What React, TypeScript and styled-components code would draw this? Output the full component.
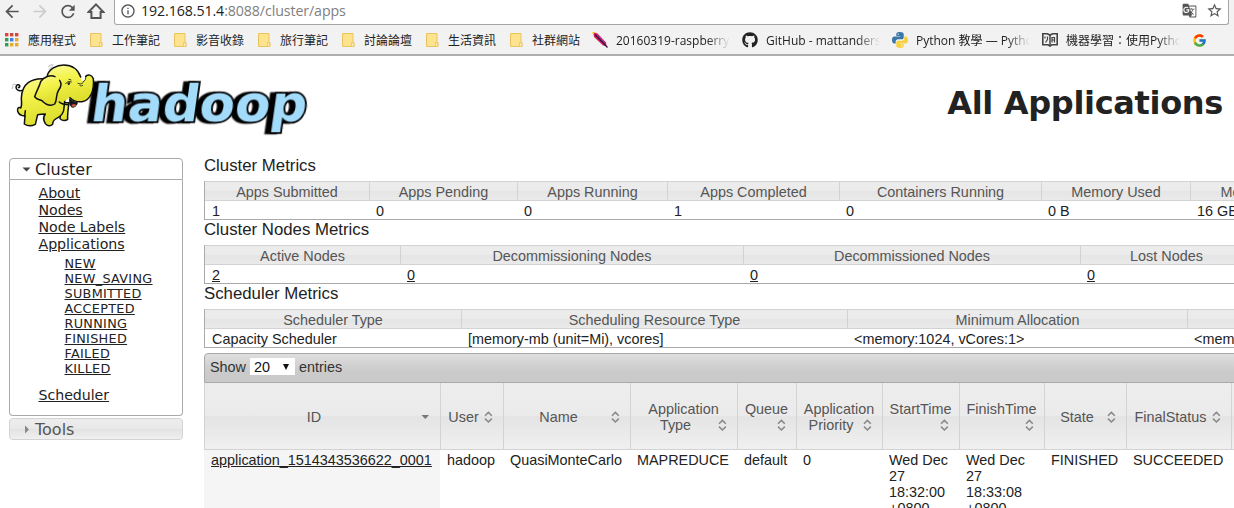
import React from 'react';
import styled, { createGlobalStyle, css } from 'styled-components';
import { MdInfoOutline, MdStarBorder, MdGTranslate, MdArrowBack, MdArrowForward, MdRefresh } from 'react-icons/md';
import { FaGithub } from 'react-icons/fa';
import { FcGoogle } from 'react-icons/fc';

const Global = createGlobalStyle`
  * { box-sizing: border-box; }
  html, body { margin: 0; background: #fff; overflow: hidden; }
`;

const Page = styled.div`
  width: 1234px;
  height: 508px;
  overflow: hidden;
  background: #fff;
  color: #222;
  font-family: 'Liberation Sans', Arial, sans-serif;
  font-size: 14.4px;
`;

/* Browser chrome */
const Chrome = styled.header`
  height: 56px;
  background: #f2f2f2;
  border-bottom: 2px solid #adadad;
  font-family: 'Open Sans', 'Noto Sans CJK TC', sans-serif;
`;
const NavRow = styled.div`
  display: flex;
  height: 25px;
  padding-right: 5px;
`;
const NavButtons = styled.div`
  display: flex;
  width: 114px;
  padding: 0 0 3px 2px;
  align-items: center;
  gap: 8px;
  color: #555;
`;
const NavButton = styled.span<{ $off?: boolean }>`
  display: flex;
  width: 20px;
  height: 22px;
  align-items: center;
  justify-content: center;
  color: ${p => (p.$off ? '#ccc' : '#555')};
`;
const UrlBox = styled.div`
  display: flex;
  flex: 1;
  align-items: center;
  padding: 0 5px 3px 5px;
  background: #fff;
  border: 1px solid #a6a6a6;
  border-top: 0;
  border-radius: 0 0 3px 3px;
  color: #555;
`;
const UrlText = styled.span`
  flex: 1;
  margin-left: 5px;
  font-size: 14.2px;
  line-height: 20px;
  letter-spacing: -0.09px;
  color: #808080;
  b { font-weight: 400; color: #222; }
`;
const UrlActions = styled.span`
  display: flex;
  align-items: center;
  gap: 9px;
`;
const Bookmarks = styled.nav`
  display: flex;
  height: 29px;
  padding: 1px 0 0 4px;
  align-items: center;
  gap: 12px;
`;
const Bookmark = styled.span`
  display: flex;
  flex: none;
  align-items: center;
  gap: 8px;
  height: 20px;
  font-size: 12px;
  line-height: 20px;
  color: #222;
`;
const BookmarkLabel = styled.span<{ $w: number }>`
  width: ${p => p.$w}px;
  padding-top: 2px;
  overflow: hidden;
  white-space: nowrap;
  ${p => p.$w > 60 && css`mask-image: linear-gradient(90deg, #000 80%, transparent 100%);`}
`;

/* Page banner */
const Banner = styled.div`
  display: flex;
  justify-content: space-between;
  height: 102px;
`;
const Title = styled.h1`
  margin: 0;
  padding: 24px 11px 0 0;
  font: bold 32px/46px 'DejaVu Sans', Verdana, sans-serif;
  letter-spacing: -0.33px;
`;
const Columns = styled.div`
  display: flex;
  align-items: flex-start;
`;

/* Sidebar */
const Sidebar = styled.aside`
  flex: none;
  width: 174px;
  margin: 0 21px 0 9px;
  font-family: 'DejaVu Sans', Verdana, sans-serif;
`;
const SectionHead = styled.div<{ $open?: boolean }>`
  display: flex;
  align-items: center;
  height: 22px;
  padding-left: 12px;
  gap: 4px;
  font-size: 16px;
  border: 1px solid ${p => (p.$open ? '#aaa' : '#d3d3d3')};
  border-radius: ${p => (p.$open ? '4px 4px 0 0' : '4px')};
  color: ${p => (p.$open ? '#222' : '#555')};
  background: ${p => (p.$open ? '#fff' : 'linear-gradient(#ededed, #e8e8e8 50%, #e3e3e3 52%, #f0f0f0)')};
`;
const SectionBody = styled.div`
  height: 236px;
  margin-bottom: 2px;
  padding: 5px 0 0 28.5px;
  border: 1px solid #aaa;
  border-top: 0;
  border-radius: 0 0 4px 4px;
`;
const MenuLink = styled.a<{ $sub?: boolean }>`
  display: block;
  width: max-content;
  text-decoration: underline;
  color: #222;
  font-size: ${p => (p.$sub ? 12.8 : 14.2)}px;
  line-height: ${p => (p.$sub ? 15 : 17)}px;
  letter-spacing: ${p => (p.$sub ? 0.3 : -0.05)}px;
`;
const SubMenu = styled.div`
  padding: 3px 0 11px 26px;
`;

/* Content tables */
const Content = styled.main`
  flex: none;
  width: 1450px;
`;
const MetricTitle = styled.div`
  height: 23px;
  font-size: 16.8px;
  line-height: 16px;
`;
const MetricBlock = styled.section`
  height: 64px;
`;
const MetricTable = styled.div<{ $cols: string }>`
  display: grid;
  grid-template-columns: ${p => p.$cols};
  height: 39px;
  border-left: 1px solid #aaa;
  border-bottom: 1px solid #aaa;
`;
const MetricHead = styled.div`
  height: 20px;
  border: 1px solid #d3d3d3;
  border-left-width: 0;
  background: linear-gradient(#ececec, #ebebeb 49%, #e5e5e5 51%, #eaeaea);
  color: #555;
  line-height: 20px;
  text-align: center;
  white-space: nowrap;
`;
const MetricCell = styled.div<{ $first?: boolean }>`
  height: 18px;
  padding-left: ${p => (p.$first ? 7 : 6)}px;
  line-height: 21px;
  white-space: nowrap;
`;
const Link = styled.a`
  color: #222;
  text-decoration: underline;
`;
const Toolbar = styled.div`
  display: flex;
  align-items: center;
  height: 30px;
  margin-top: 3px;
  padding: 0 0 3px 5px;
  border: 1px solid #aaa;
  border-radius: 4px 4px 0 0;
  background: linear-gradient(#dedede, #cbcbcb 60%, #c9c9c9);
  color: #333;
`;
const PageSize = styled.span`
  display: flex;
  align-items: center;
  justify-content: space-between;
  width: 45px;
  height: 17px;
  margin: 0 4px;
  padding: 0 5px 0 4px;
  background: #fff;
  color: #111;
`;
const AppGrid = styled.div`
  display: grid;
  grid-template-columns: 236px 63px 127px 107px 59px 86px 77px 85px 82px 105px 219px;
`;
const AppHead = styled.div`
  display: flex;
  flex-direction: column;
  justify-content: center;
  height: 67px;
  padding: 2px 7px 0 6px;
  border-left: 1px solid #d3d3d3;
  border-bottom: 1px solid #d3d3d3;
  background: linear-gradient(#ededed, #ebebeb 49%, #e4e4e4 51%, #f0f0f0);
  color: #555;
  line-height: 16px;
  white-space: nowrap;
`;
const HeadLine = styled.div`
  display: flex;
  align-items: center;
  justify-content: center;
  height: 16px;
`;
const HeadText = styled.span`
  flex: 1;
  text-align: center;
`;
const AppCell = styled.div<{ $shade?: boolean }>`
  height: 80px;
  padding: 2px 4px 0 7px;
  line-height: 16px;
  color: #222;
  background: ${p => (p.$shade ? '#f5f5f5' : '#fff')};
`;

const SortIcon = ({ desc }: { desc?: boolean }) => (
  <svg width="16" height="14" viewBox="0 0 16 14">
    {desc ? <path d="M4.500 5h7.500l-3.700 4z" fill="#777" /> : (
      <path d="M5 5.800 8.400 2.400l3.400 3.400M5 8.600 8.400 12l3.400-3.400" fill="none" stroke="#888" strokeWidth="1.5" />
    )}
  </svg>
);

const Folder = () => (
  <svg width="16" height="16" viewBox="0 0 16 16">
    <path d="M2.5 1.500h10.5v9.200h1v3.800h-11.500z" fill="#fde38d" stroke="#e8c45e" />
    <path d="M11.500 10.800h2.400v3.600h-2.400z" fill="#fff0b5" stroke="#e8c45e" strokeWidth=".8" />
  </svg>
);

const AppsIcon = () => {
  const colors = ['#d9453c', '#d9453c', '#d9453c', '#2d9c58', '#3f7de0', '#e6ab2c', '#2d9c58', '#e6ab2c', '#e6ab2c'];
  return (
    <svg width="16" height="16" viewBox="0 0 16 16">
      {colors.map((c, i) => (
        <rect key={i} x={1 + (i % 3) * 5} y={1 + Math.floor(i / 3) * 5} width="3.4" height="3.4" fill={c} />
      ))}
    </svg>
  );
};

const Feather = () => (
  <svg width="16" height="16" viewBox="0 0 16 16">
    <path d="M1 0 5.500 1.500 14 10.500l.5 3.500-3.500-.5L2 5z" fill="#e0185c" />
    <path d="M3 2.500 15.500 15.500" stroke="#26123f" strokeWidth="1.200" />
    <path d="M4.500 2.600 12.500 10.500" stroke="#8a3fb0" strokeWidth="1" />
    <path d="M0 0h2.700L1.200 3z" fill="#f4d21c" />
  </svg>
);

const PythonIcon = () => (
  <svg width="16" height="16" viewBox="0 0 16 16">
    <path d="M7.9 0C4.6 0 4.3 1.4 4.3 2.2V4h3.9v.6H2.3C.8 4.600 0 5.900 0 8s.9 3.600 2.200 3.600h1.500V9.500c0-1.200 1-2.200 2.200-2.200h3.900c1 0 1.900-.8 1.900-1.900V2.200C11.700.9 10.300 0 7.900 0z" fill="#3b76a8" />
    <path d="M8.100 16c3.300 0 3.600-1.400 3.600-2.200V12H7.800v-.6h5.900c1.500 0 2.300-1.300 2.300-3.400s-.9-3.600-2.200-3.600h-1.500v2.100c0 1.200-1 2.200-2.200 2.200H6.200c-1 0-1.900.8-1.900 1.900v3.200c0 1.300 1.400 2.200 3.800 2.200z" fill="#f9d13e" />
    <circle cx="6.200" cy="2.100" r=".7" fill="#fff" />
    <circle cx="9.800" cy="13.900" r=".7" fill="#fff" />
  </svg>
);

const BookIcon = () => (
  <svg width="16" height="16" viewBox="0 0 16 16" fill="none" stroke="#444">
    <path d="M.8 1.800h4.500L8 3l2.700-1.200h4.500v11H10L8 14l-2-1.200H.8z" strokeWidth="1.600" />
    <path d="M8 3v11" strokeWidth="1.500" />
    <path d="M3 4.500v2M5.500 4.500v3l-2 3M10 10.500v-5h2.500v2.500H10M12.500 8v2.500" strokeWidth="1.200" />
  </svg>
);

const HomeIcon = () => (
  <svg width="18" height="18" viewBox="0 0 18 18" fill="none" stroke="#555" strokeWidth="2">
    <path d="M1.600 10 9 2.400 16.400 10H13.600v6H4.400v-6z" />
  </svg>
);

const Logo = () => (
  <svg width="320" height="85" viewBox="0 0 960 255">
    <defs>
      <linearGradient id="hide" x1="0" y1="0" x2="0.25" y2="1">
        <stop offset="0" stopColor="#fbfb9a" />
        <stop offset=".4" stopColor="#f3f34c" />
        <stop offset="1" stopColor="#dede2e" />
      </linearGradient>
    </defs>
    <g transform="translate(268 196) skewX(-8)">
      <text
        x="0"
        y="0"
        textLength="648"
        lengthAdjust="spacingAndGlyphs"
        fontFamily="DejaVu Sans, Verdana, sans-serif"
        fontWeight="bold"
        fontSize="154"
        fill="#a3dcfb"
        stroke="#000"
        strokeWidth="11"
        strokeLinejoin="miter"
        style={{ paintOrder: 'stroke', filter: 'drop-shadow(-14px 1px 0 #000)' }}
      >hadoop</text>
    </g>
    <g stroke="#111" strokeWidth="4.500" strokeLinejoin="round" strokeLinecap="round" fill="url(#hide)">
      <path d="M66 103c-10 4-18-2-18-10 1-7 8-9 11-4 2 4-2 7-4 5" fill="none" />
      <path d="M178 140c-2 20 5 34 2 48 6 8 18 6 23 2-1-18 2-34 4-50z" />
      <path d="M128 68c-30-1-62 12-64 58 0 12 3 22-2 30-8-5-10 3-9 10 3 9 12 14 22 14l-2 24c9 6 23 6 33 1l7-29c9-2 16-2 23-2-5 6-6 14-4 20l4 9c6 8 16 8 22 2 0-10 5-15 12-18 14-7 22-18 22-32l4-40z" />
      <path d="M76 164l-2 17" fill="none" />
      <path d="M142 58C147 40 169 27 191 27c27 0 44 14 54 48 9 0 14-3 12-14 8-6 18-6 23 7 3 35-8 65-34 69-14 2-26-2-36-12l-32 18-30-15z" stroke="none" />
      <path d="M142 58C147 40 169 27 191 27c26 0 43 13 51 36M257 61c8-6 18-6 23 7 3 35-8 65-34 69-14 2-26-2-36-12M178 138c8 8 18 8 28 8" fill="none" />
      <path d="M209 130c-1 10 1 18 6 23 8 2 15-3 17-13-8-1-16-5-23-10z" fill="#171717" strokeWidth="3" />
      <path d="M214 149c5-6 12-4 15-1-3 5-11 6-15 1z" fill="#e55a48" stroke="none" />
      <path d="M165 62c-14-6-34 0-43 15-5 17-13 29-18 45 4 8 14 8 22 12 12 12 26 18 38 10 8-10 2-26 12-42 8-10 9-20 3-29" />
      <path d="M197 83c4-7 11-8 17-5M234 82c5 3 9 3 15-2M240 89c3 1 5 1 8-1M257 61c1 8-1 13-7 16M207 70l6 2" fill="none" strokeWidth="2.500" />
      <path d="M202 81c3-3 7-3 9-1-1 6-4 8-7 7z" fill="#222" stroke="none" />
      <path d="M146 32c2-4 7-6 13-5M148 40c2-4 5-6 9-7M37 88c1-3 5-4 9-3M36 98l3-6" fill="none" stroke="#888" strokeWidth="2" />
    </g>
  </svg>
);

const clusterMetrics = [['Apps Submitted', '1'], ['Apps Pending', '0'], ['Apps Running', '0'], ['Apps Completed', '1'], ['Containers Running', '0'], ['Memory Used', '0 B'], ['Memory Total', '16 GB']];
const nodeMetrics = [['Active Nodes', '2'], ['Decommissioning Nodes', '0'], ['Decommissioned Nodes', '0'], ['Lost Nodes', '0']];
const schedulerMetrics = [['Scheduler Type', 'Capacity Scheduler'], ['Scheduling Resource Type', '[memory-mb (unit=Mi), vcores]'], ['Minimum Allocation', '<memory:1024, vCores:1>'], ['Maximum Allocation', '<memory:8192, vCores:8>']];

const Metrics = ({ title, cols, data, linked }: { title: string; cols: string; data: string[][]; linked?: boolean }) => (
  <MetricBlock>
    <MetricTitle>{title}</MetricTitle>
    <MetricTable $cols={cols}>
      {data.map(([head]) => <MetricHead key={head}>{head}</MetricHead>)}
      {data.map(([head, value], i) => (
        <MetricCell key={head} $first={i === 0}>{linked ? <Link>{value}</Link> : value}</MetricCell>
      ))}
    </MetricTable>
  </MetricBlock>
);

const appHeads = [['ID'], ['User'], ['Name'], ['Application', 'Type'], ['Queue', ''], ['Application', 'Priority'], ['StartTime', ''], ['FinishTime', ''], ['State'], ['FinalStatus'], ['']];
const appRow = ['application_1514343536622_0001', 'hadoop', 'QuasiMonteCarlo', 'MAPREDUCE', 'default', '0', 'Wed Dec 27 18:32:00 +0800', 'Wed Dec 27 18:33:08 +0800', 'FINISHED', 'SUCCEEDED', ''];
const folders = ['工作筆記', '影音收錄', '旅行筆記', '討論論壇', '生活資訊', '社群網站'];
const states = ['NEW', 'NEW_SAVING', 'SUBMITTED', 'ACCEPTED', 'RUNNING', 'FINISHED', 'FAILED', 'KILLED'];

export default function App() {
  return (
    <Page>
      <Global />
      <Chrome>
        <NavRow>
          <NavButtons>
            <NavButton><MdArrowBack size={21} /></NavButton>
            <NavButton $off><MdArrowForward size={21} /></NavButton>
            <NavButton><MdRefresh size={21} /></NavButton>
            <NavButton><HomeIcon /></NavButton>
          </NavButtons>
          <UrlBox>
            <MdInfoOutline size={16} />
            <UrlText><b>192.168.51.4</b>:8088/cluster/apps</UrlText>
            <UrlActions>
              <MdGTranslate size={15} />
              <MdStarBorder size={17} />
            </UrlActions>
          </UrlBox>
        </NavRow>
        <Bookmarks>
          <Bookmark><AppsIcon /><BookmarkLabel $w={48}>應用程式</BookmarkLabel></Bookmark>
          {folders.map(name => (
            <Bookmark key={name}><Folder /><BookmarkLabel $w={48}>{name}</BookmarkLabel></Bookmark>
          ))}
          <Bookmark><Feather /><BookmarkLabel $w={114}>20160319-raspberry</BookmarkLabel></Bookmark>
          <Bookmark><FaGithub size={16} /><BookmarkLabel $w={114}>GitHub - mattanders</BookmarkLabel></Bookmark>
          <Bookmark><PythonIcon /><BookmarkLabel $w={114}>Python 教學 — Pytho</BookmarkLabel></Bookmark>
          <Bookmark><BookIcon /><BookmarkLabel $w={114}>機器學習：使用Pytho</BookmarkLabel></Bookmark>
          <Bookmark><FcGoogle size={15} /></Bookmark>
        </Bookmarks>
      </Chrome>
      <Banner>
        <Logo />
        <Title>All Applications</Title>
      </Banner>
      <Columns>
        <Sidebar>
          <SectionHead $open>
            <svg width="9" height="9" viewBox="0 0 9 9"><path d="M.500 2.500h8l-4 4z" fill="#444" /></svg>
            Cluster
          </SectionHead>
          <SectionBody>
            <MenuLink>About</MenuLink>
            <MenuLink>Nodes</MenuLink>
            <MenuLink>Node Labels</MenuLink>
            <MenuLink>Applications</MenuLink>
            <SubMenu>{states.map(s => <MenuLink key={s} $sub>{s}</MenuLink>)}</SubMenu>
            <MenuLink>Scheduler</MenuLink>
          </SectionBody>
          <SectionHead>
            <svg width="9" height="9" viewBox="0 0 9 9"><path d="M3 .500v8l4-4z" fill="#888" /></svg>
            Tools
          </SectionHead>
        </Sidebar>
        <Content>
          <Metrics title="Cluster Metrics" cols="165px 148px 150px 172px 202px 149px 146px" data={clusterMetrics} />
          <Metrics title="Cluster Nodes Metrics" cols="196px 343px 337px 172px" data={nodeMetrics} linked />
          <Metrics title="Scheduler Metrics" cols="257px 386px 340px 400px" data={schedulerMetrics} />
          <Toolbar>
            Show
            <PageSize>20<svg width="8" height="8" viewBox="0 0 8 8"><path d="M1 1h6L4 7z" fill="#111" /></svg></PageSize>
            entries
          </Toolbar>
          <AppGrid>
            {appHeads.map((lines, i) => (
              <AppHead key={i}>
                {lines.map((line, n) => (
                  <HeadLine key={n}>
                    <HeadText>{line}</HeadText>
                    {n === lines.length - 1 && <SortIcon desc={i === 0} />}
                  </HeadLine>
                ))}
              </AppHead>
            ))}
            {appRow.map((value, i) => (
              <AppCell key={i} $shade={i === 0}>{i === 0 ? <Link>{value}</Link> : value}</AppCell>
            ))}
          </AppGrid>
        </Content>
      </Columns>
    </Page>
  );
}
